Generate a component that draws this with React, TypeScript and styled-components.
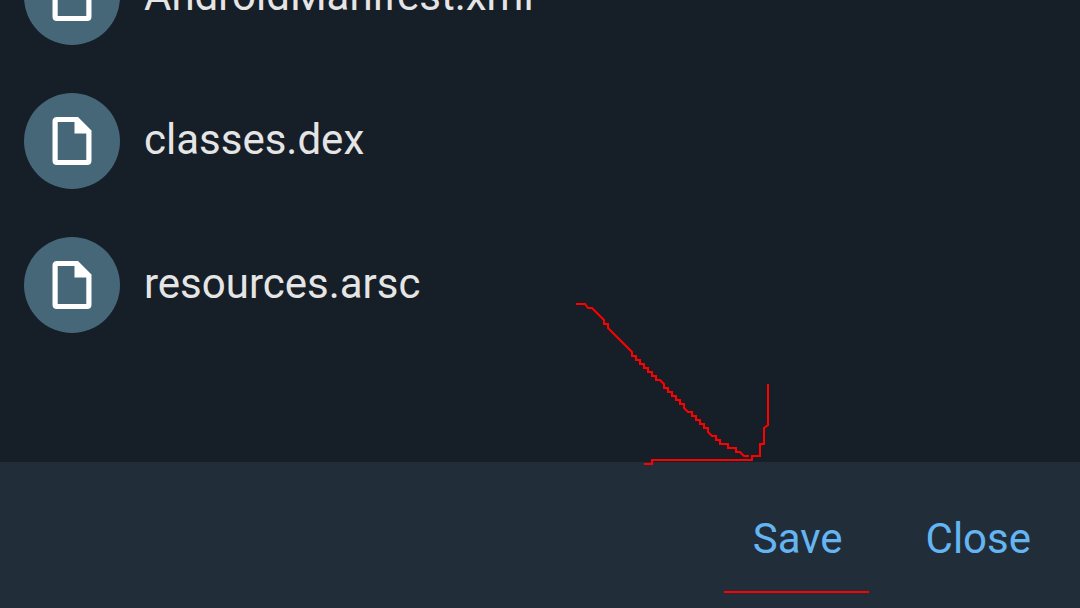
import styled, { createGlobalStyle } from "styled-components";

const GlobalStyle = createGlobalStyle`
  body {
    margin: 0;
    background: #161e27;
    font-family: Roboto, "Noto Sans", sans-serif;
  }
`;

const Screen = styled.div`
  position: relative;
  display: flex;
  flex-direction: column;
  height: 100vh;
  overflow: hidden;
  background: #161e27;
`;

const FileList = styled.ul`
  flex: 1;
  min-height: 0;
  display: flex;
  flex-direction: column;
  justify-content: flex-end;
  margin: 0;
  padding: 0 0 105px;
  list-style: none;
`;

const FileRow = styled.li`
  flex: none;
  display: flex;
  align-items: center;
  gap: 24px;
  height: 144px;
  padding: 0 24px;
`;

const IconCircle = styled.span`
  flex: none;
  display: flex;
  align-items: center;
  justify-content: center;
  width: 96px;
  height: 96px;
  border-radius: 50%;
  background: #466778;
`;

const FileName = styled.span`
  padding-bottom: 2px;
  color: #e5e5e5;
  font-size: 42px;
  line-height: 48px;
`;

const ActionBar = styled.footer`
  flex: none;
  display: flex;
  justify-content: flex-end;
  gap: 35px;
  padding: 29px 25px 21px;
  background: #222d3a;
`;

const ActionButton = styled.button`
  height: 96px;
  padding: 0 24px;
  border: 0;
  background: transparent;
  color: #64b5f1;
  font: inherit;
  font-size: 42px;
  line-height: 48px;
  cursor: pointer;
`;

const Scribble = styled.svg`
  position: absolute;
  right: 211px;
  bottom: 15px;
  pointer-events: none;
`;

function FileIcon() {
  return (
    <svg width="48" height="48" viewBox="0 0 48 48" aria-hidden="true">
      <path
        fill="#fff"
        fillRule="evenodd"
        d="M9 0H30L43.5 13.5V43.5Q43.5 48 39 48H9Q4.5 48 4.5 43.5V4.5Q4.5 0 9 0ZM9.7 5V43H38.3V16.5H26.5V5Z"
      />
    </svg>
  );
}

const files = ["AndroidManifest.xml", "classes.dex", "resources.arsc"];

export default function App() {
  return (
    <>
      <GlobalStyle />
      <Screen>
        <FileList>
          {files.map((name) => (
            <FileRow key={name}>
              <IconCircle>
                <FileIcon />
              </IconCircle>
              <FileName>{name}</FileName>
            </FileRow>
          ))}
        </FileList>
        <ActionBar>
          <ActionButton type="button">Save</ActionButton>
          <ActionButton type="button">Close</ActionButton>
        </ActionBar>
        <Scribble
          width="293"
          height="290"
          viewBox="576 303 293 290"
          fill="none"
          stroke="#f00"
          strokeWidth="2"
          aria-hidden="true"
        >
          <path d="M576 304H585L588 308H592L604 320V324H608V328L632 352V356H636V360H640V364H644V368H648V372H652V376H656V380H660L664 384V388H668V392H672V396H676V400H680V404H684V408L688 412H692V416H696V420H700V424H704V428H708V432L712 436H716V440H720V444H728V448H736V452H740L744 456H749" />
          <path d="M644 464H652V460H752V456H760V444H764V428L768 425V384" />
          <path d="M724 592H869" />
        </Scribble>
      </Screen>
    </>
  );
}
